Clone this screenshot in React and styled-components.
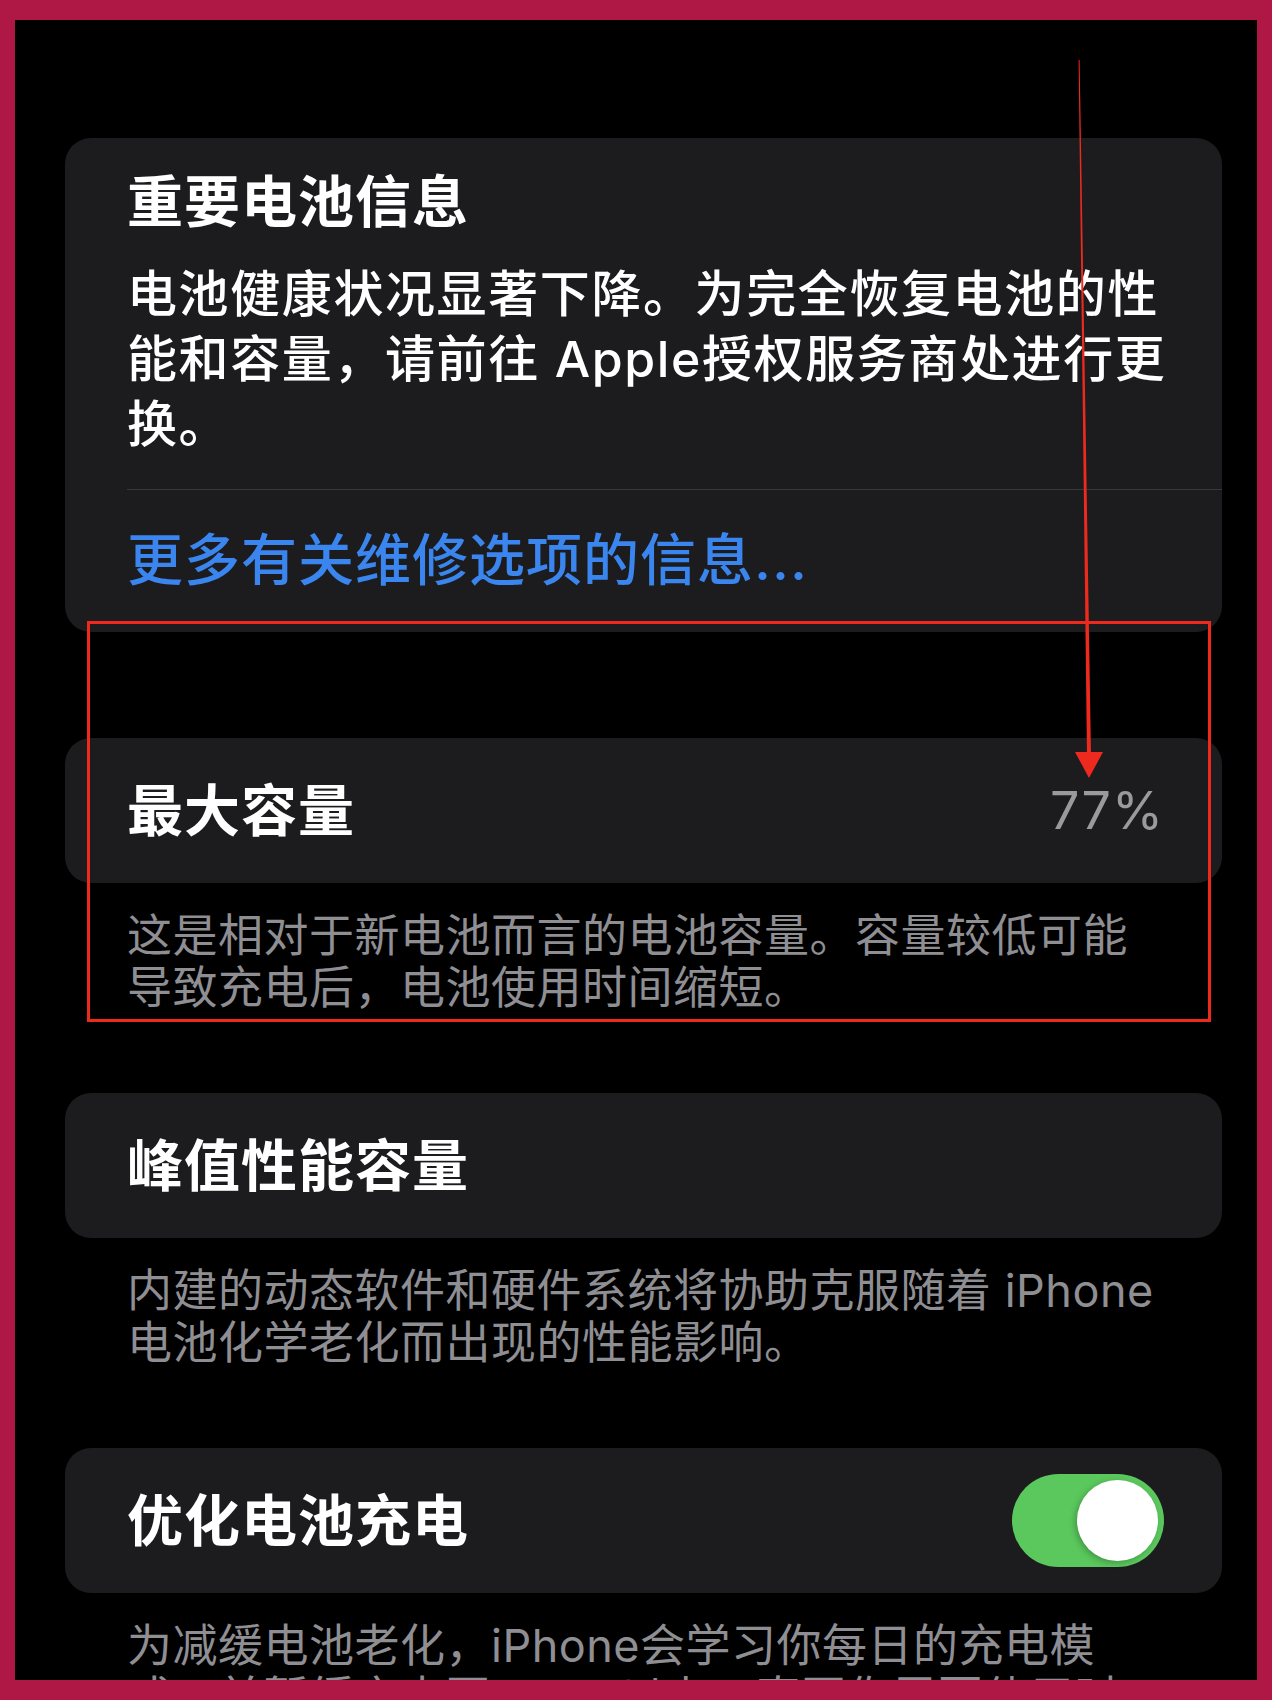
import React from 'react';
import styled, { createGlobalStyle } from 'styled-components';

const GlobalStyle = createGlobalStyle`
    html, body {
        margin: 0;
        padding: 0;
        background: #000;
    }
    * {
        box-sizing: border-box;
    }
`;

const Frame = styled.div`
    width: 1272px;
    height: 1700px;
    border-style: solid;
    border-color: #af1845;
    border-width: 20px 15px 20px 15px;
    background: #000;
    overflow: hidden;
`;

const Screen = styled.div`
    position: relative;
    height: 100%;
    padding: 118px 35px 0 50px;
    font-family: Inter, "Noto Sans CJK SC", sans-serif;
    color: #fff;
`;

const Card = styled.div`
    background: #1c1c1e;
    border-radius: 26px;
`;

const InfoCard = styled(Card)`
    padding: 30px 0 38px 62px;
    margin-bottom: 106px;
`;

const CardTitle = styled.div`
    font-size: 56px;
    font-weight: 700;
    line-height: 68px;
    letter-spacing: 1px;
`;

const Body = styled.div`
    margin-top: 26px;
    padding-right: 20px;
    font-size: 50px;
    font-weight: 500;
    line-height: 65px;
    letter-spacing: 1.6px;
    white-space: nowrap;
`;

const Divider = styled.div`
    margin-top: 32px;
    height: 1px;
    background: #38383a;
`;

const Link = styled.div`
    margin-top: 36px;
    font-size: 56px;
    font-weight: 500;
    line-height: 68px;
    color: #3a85ee;
    letter-spacing: 1px;
`;

const RowCard = styled(Card)`
    height: 145px;
    display: flex;
    align-items: center;
    justify-content: space-between;
    padding: 0 58px 0 62px;
`;

const Value = styled.div`
    font-size: 52px;
    font-weight: 400;
    color: #9a9a9e;
    letter-spacing: 1px;
`;

const Footnote = styled.div`
    padding: 27px 20px 79px 62px;
    font-size: 45px;
    font-weight: 400;
    line-height: 52px;
    color: #8e8e93;
    letter-spacing: 0.5px;
    white-space: nowrap;
`;

const Track = styled.div`
    width: 152px;
    height: 93px;
    border-radius: 47px;
    padding: 6px;
    display: flex;
    justify-content: ${p => (p.on ? 'flex-end' : 'flex-start')};
    background: ${p => (p.on ? '#5ac85d' : '#39393d')};
`;

const Knob = styled.div`
    width: 81px;
    height: 81px;
    border-radius: 50%;
    background: #fff;
    box-shadow: -2px 2px 6px rgba(0, 0, 0, 0.25);
`;

/* red markup drawn over the screenshot */
const Highlight = styled.div`
    position: absolute;
    left: 72px;
    top: 601px;
    width: 1124px;
    height: 401px;
    border: 3px solid #ee2a1f;
    pointer-events: none;
`;

const ArrowLayer = styled.svg`
    position: absolute;
    left: 1045px;
    top: 40px;
    pointer-events: none;
`;

const Switch = ({ on }) => (
    <Track on={on ? 1 : 0}>
        <Knob />
    </Track>
);

const Arrow = () => (
    <ArrowLayer width="60" height="760" viewBox="0 0 60 760">
        <polygon points="18.6,0 19.6,0 31,696 27,696" fill="#ee2a1f" />
        <polygon points="15,692 43,692 29,718" fill="#ee2a1f" />
    </ArrowLayer>
);

const App = () => (
    <>
        <GlobalStyle />
        <Frame>
            <Screen>
                <InfoCard>
                    <CardTitle>重要电池信息</CardTitle>
                    <Body>
                        电池健康状况显著下降。为完全恢复电池的性<br />
                        能和容量，请前往 Apple授权服务商处进行更<br />
                        换。
                    </Body>
                    <Divider />
                    <Link>更多有关维修选项的信息...</Link>
                </InfoCard>

                <RowCard>
                    <CardTitle>最大容量</CardTitle>
                    <Value>77%</Value>
                </RowCard>
                <Footnote>
                    这是相对于新电池而言的电池容量。容量较低可能<br />
                    导致充电后，电池使用时间缩短。
                </Footnote>

                <RowCard>
                    <CardTitle>峰值性能容量</CardTitle>
                </RowCard>
                <Footnote>
                    内建的动态软件和硬件系统将协助克服随着 iPhone<br />
                    电池化学老化而出现的性能影响。
                </Footnote>

                <RowCard>
                    <CardTitle>优化电池充电</CardTitle>
                    <Switch on />
                </RowCard>
                <Footnote>
                    为减缓电池老化，iPhone会学习你每日的充电模<br />
                    式，并暂缓充电至 80% 以上，直至你需要使用时。
                </Footnote>

                <Highlight />
                <Arrow />
            </Screen>
        </Frame>
    </>
);

export default App;
